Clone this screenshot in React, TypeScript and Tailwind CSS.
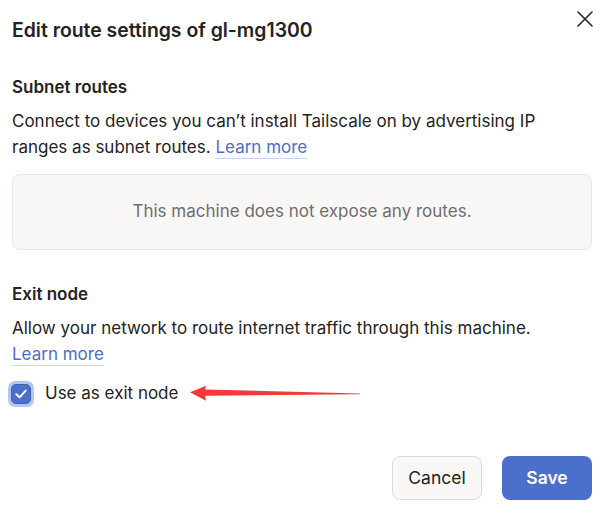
import { X } from 'lucide-react';

const font = { fontFamily: 'Inter, "Noto Sans", sans-serif' };

function LearnMore() {
  return (
    <a className="text-[#4b6fc6] underline decoration-[#c9d6f2] decoration-1 underline-offset-[5px] cursor-pointer">Learn more</a>
  );
}

function ExitArrow() {
  // red annotation arrow pointing at the checkbox
  return (
    <svg className="absolute left-[186px] top-[382px]" width="178" height="22" viewBox="0 0 178 22">
      <polygon points="4,10.3 20,3.7 19,7.6 174,11.4 174,12.3 19,13.8 20,18.8" fill="#f23a3a" />
    </svg>
  );
}

export default function App() {
  return (
    <div className="relative w-[611px] h-[521px] bg-white text-[#232323] overflow-hidden" style={font}>
      <button className="absolute left-[571px] top-[5px] text-[#2a2a2a]">
        <X size={28} strokeWidth={1.4} />
      </button>
      <div className="pl-3 pr-[19px] pt-4">
        <h1 className="text-[19.4px] leading-7 font-semibold">Edit route settings of gl-mg1300</h1>

        <h2 className="mt-[31px] text-[17px] leading-6 font-semibold">Subnet routes</h2>
        <p className="mt-[9px] text-[17px] leading-[26px]">
          Connect to devices you can’t install Tailscale on by advertising IP ranges as subnet routes. <LearnMore />
        </p>
        <div className="mt-[14px] h-[76px] flex items-center justify-center rounded-lg border border-[#e9e8e6] bg-[#f8f7f6] text-[17px] text-[#6e6e6e]">
          This machine does not expose any routes.
        </div>

        <h2 className="mt-[32px] text-[17px] leading-6 font-semibold">Exit node</h2>
        <p className="mt-[9px] text-[17px] leading-[26px]">
          Allow your network to route internet traffic through this machine.
          <br />
          <LearnMore />
        </p>

        <label className="mt-[14px] -ml-1 flex items-center h-[26px]">
          <span className="w-[26px] h-[26px] rounded-[7px] bg-[#b3c7f0] flex items-center justify-center">
            <span className="w-[20px] h-[20px] rounded-[5px] bg-[#4b6fcb] border border-[#3d5eb3] flex items-center justify-center">
              <svg width="14" height="14" viewBox="0 0 14 14" fill="none">
                <path d="M2.3 7.2 L5.6 10.3 L11.7 3.6" stroke="white" strokeWidth="2" strokeLinecap="round" strokeLinejoin="round" />
              </svg>
            </span>
          </span>
          <span className="ml-[11px] text-[17px]">Use as exit node</span>
        </label>

        <div className="mt-[49px] flex justify-end gap-5">
          <button className="w-[90px] h-[44px] rounded-lg border border-[#dcdad7] bg-[#f9f8f6] text-[17.5px] text-[#232323]">Cancel</button>
          <button className="w-[90px] h-[44px] rounded-lg bg-[#4b70cc] text-[17.5px] font-semibold text-white">Save</button>
        </div>
      </div>
      <ExitArrow />
    </div>
  );
}
